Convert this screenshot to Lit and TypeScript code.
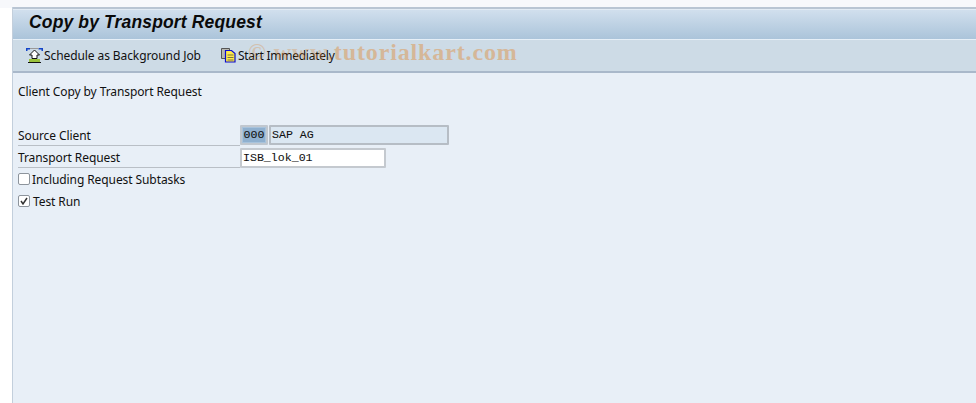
import { LitElement, html, css } from "lit";
import { customElement } from "lit/decorators.js";

@customElement("app-root")
export class AppRoot extends LitElement {
  static styles = css`
    :host { display: block; width: 976px; height: 403px; background: #fff; overflow: hidden; position: relative;
      font-family: "Noto Sans", "DejaVu Sans", sans-serif; font-size: 12px; letter-spacing: -0.09px; color: #111; }
    .page { height: 403px; box-sizing: border-box; padding-left: 13px; display: flex; flex-direction: column;
      background: linear-gradient(#f7f8fb, #f7f8fb) top left / 100% 8px no-repeat, #fff; }
    .main { flex: 1; margin-top: 7px; border-left: 1px solid #c3cfdc; margin-left: -1px; display: flex; flex-direction: column; min-height: 0; }
    .title { box-sizing: border-box; border-top: 2px solid #b9c5d3; box-shadow: inset 0 1px 0 #e2ebf4; height: 33px;
      background: linear-gradient(#d2e0ee, #abc4da); display: flex; align-items: center; padding-left: 16px; border-bottom: 1px solid #e6eff7; }
    .title h1 { margin: 0; font: italic bold 17.5px "Liberation Sans", sans-serif; color: #0a0a0a; letter-spacing: 0.15px; position: relative; top: -2px; }
    .toolbar { height: 33px; box-sizing: border-box; background: #cddbe6; border-bottom: 2px solid #a9b8ca; display: flex; align-items: center; padding-left: 13px; gap: 19px; }
    .tb { display: flex; align-items: center; white-space: nowrap; }
    .tb svg { display: block; flex: none; }
    .tight { letter-spacing: -0.25px; }
    .body { flex: 1; background: #e8eff7; padding: 11px 0 0 5px; }
    .intro { height: 15px; line-height: 15px; }
    .rows { margin-top: 25px; display: grid; grid-template-columns: 222px auto; grid-auto-rows: 22px; width: 440px; }
    .lab { border-bottom: 1px solid #b9bfc6; display: flex; align-items: center; height: 22px; box-sizing: border-box; padding-top: 2px; }
    .fields { display: flex; gap: 1px; align-items: center; }
    .f { height: 20px; box-sizing: border-box; border: 2px solid #b6bdc5; border-radius: 1px; font: 11.6px/16px "Liberation Mono", monospace; -webkit-text-stroke: 0.08px #111; letter-spacing: 0; padding-left: 1px; color: #111; white-space: pre; }
    .code { width: 28px; background: #8fb0cf; border-color: #c0c7cf; padding: 0; text-align: center; box-shadow: inset 0 0 0 1px #a8c3dc; }
    .name { width: 180px; background: #dbe7f2; }
    .input { width: 146px; background: #fff; border-color: #c4c9cf; margin-top: 1px; }
    .chk { display: flex; align-items: center; gap: 2px; height: 22px; }
    .box { width: 12px; height: 12px; box-sizing: border-box; border: 1px solid #8d949c; border-radius: 2px; background: #fff; display: block; flex: none; }
    .test { margin-left: 1px; }
    .wm { position: absolute; left: 248px; top: 39px; font: bold 24px "Liberation Serif", serif; color: #e0862f; opacity: 0.42; white-space: nowrap; letter-spacing: 0.87px; pointer-events: none; }
    .faint { opacity: 0.7; }
  `;

  render() {
    return html`
      <div class="page">
        <div class="main">
          <div class="title"><h1>Copy by Transport Request</h1></div>
          <div class="toolbar">
            <div class="tb">
              <svg width="18" height="17" viewBox="0 0 18 17">
                <path d="M0 1h4v1.500H1.500V4H0zM12.500 1h4.500v3h-1.500V2.500h-3z" fill="#1244c8" />
                <path d="M4 1h8.500v1H4z" fill="#999" />
                <path d="M8.500 3l5 5H11v3.500H6V8H3.500z" fill="#fff" stroke="#111" />
                <path d="M3 12h11v3H3z" fill="#9ac23c" />
                <path d="M2 15h13v1H2z" fill="#111" />
              </svg>
              <span>Schedule as Background Job</span>
            </div>
            <div class="tb">
              <svg width="18" height="17" viewBox="0 0 18 17">
                <path d="M1.500 1.500h8v10h-8z" fill="#b8b8b0" stroke="#555" />
                <path d="M5.500 3.500h6l3.500 3v8.500H5.500z" fill="#ffe94a" stroke="#0a0ad0" stroke-width="1.200" />
                <path d="M7.500 8h6M7.500 10.500h6M7.500 13h6" stroke="#554" stroke-width="0.8" />
              </svg>
              <span class="tight">Start Immediately</span>
            </div>
          </div>
          <div class="body">
            <div class="intro">Client Copy by Transport Request</div>
            <div class="rows">
              <div class="lab">Source Client</div>
              <div class="fields"><div class="f code">000</div><div class="f name">SAP AG</div></div>
              <div class="lab">Transport Request</div>
              <div class="fields"><div class="f input">ISB_lok_01</div></div>
              <div class="chk"><span class="box"></span><span>Including Request Subtasks</span></div>
              <div></div>
              <div class="chk">
                <svg class="box" width="12" height="12" viewBox="0 0 10 10"><path d="M2 5l2 3 4-6" fill="none" stroke="#333" stroke-width="1.500" /></svg>
                <span class="test">Test Run</span>
              </div>
              <div></div>
            </div>
          </div>
        </div>
      </div>
      <div class="wm"><span class="faint">© www.</span>tutorialkart.com</div>
    `;
  }
}
